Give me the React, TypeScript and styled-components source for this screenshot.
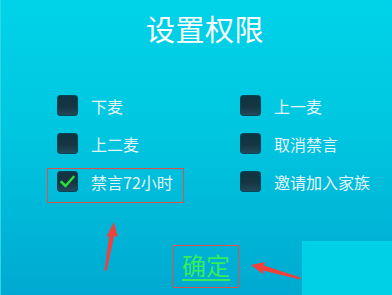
import React from "react";
import styled, { createGlobalStyle, css } from "styled-components";

const Global = createGlobalStyle`
  html, body { margin: 0; padding: 0; }
  body { width: 392px; height: 295px; overflow: hidden; }
  #root { width: 392px; height: 295px; }
`;

const Page = styled.div`
  position: relative;
  width: 392px;
  height: 295px;
  box-sizing: border-box;
  overflow: hidden;
  background: linear-gradient(180deg, #00d3e9 0%, #00c6e0 45%, #00a9d1 100%);
  border-left: 1px solid #2fd6ea;
  font-family: "Noto Sans CJK SC", "Noto Sans", sans-serif;
  display: flex;
  flex-direction: column;
  padding-left: 56px;
`;

const Title = styled.h1`
  margin: 12px 0 0;
  padding-left: 89px;
  font-size: 29px;
  line-height: 32px;
  font-weight: 400;
  color: #ffffff;
  letter-spacing: 0.5px;
`;

const Grid = styled.div`
  margin-top: 51px;
  display: grid;
  grid-template-columns: 183px auto;
  row-gap: 17px;
`;

const Cell = styled.label<{ $marked?: boolean }>`
  position: relative;
  display: flex;
  align-items: center;
  gap: 13px;
  height: 21px;
  ${(p) =>
    p.$marked &&
    css`
      &::after {
        content: "";
        position: absolute;
        left: -10px;
        top: -3px;
        width: 137px;
        height: 35px;
        border: 1px solid #d9534a;
        box-sizing: border-box;
        pointer-events: none;
      }
    `}
`;

const Box = styled.span`
  width: 21px;
  height: 21px;
  box-sizing: border-box;
  border-radius: 3px;
  background: linear-gradient(180deg, #0f3442 0%, #163542 55%, #22495a 100%);
  border: 1px solid #0b4656;
  display: flex;
  align-items: center;
  justify-content: center;
`;

const Label = styled.span`
  font-size: 16px;
  line-height: 20px;
  color: #e3f4f8;
`;

const Footer = styled.div`
  margin-top: 53px;
  padding-left: 116px;
  display: flex;
`;

const Confirm = styled.div`
  padding: 6px 8px 9px 8px;
  border: 1px solid #d9534a;
  font-size: 24px;
  line-height: 26px;
  color: #34ec5c;
  text-decoration: underline;
  text-decoration-thickness: 2px;
  text-underline-offset: 4px;
`;

const Panel = styled.div`
  position: absolute;
  left: 301px;
  top: 241px;
  width: 91px;
  height: 54px;
  background: #00d0e6;
`;

const Arrows = styled.svg`
  position: absolute;
  left: 0;
  top: 0;
  pointer-events: none;
`;

const Check = () => (
  <svg width="15" height="13" viewBox="0 0 15 13">
    <path d="M1.5 7 L5.5 11 L13.5 2" fill="none" stroke="#2add3a" strokeWidth="2.6" strokeLinecap="round" strokeLinejoin="round" />
  </svg>
);

const items = [
  { t: "下麦" },
  { t: "上一麦" },
  { t: "上二麦" },
  { t: "取消禁言" },
  { t: "禁言72小时", checked: true },
  { t: "邀请加入家族" },
];

export default function App() {
  return (
    <>
      <Global />
      <Page>
        <Title>设置权限</Title>
        <Grid>
          {items.map((it) => (
            <Cell key={it.t} $marked={it.checked}>
              <Box>{it.checked && <Check />}</Box>
              <Label>{it.t}</Label>
            </Cell>
          ))}
        </Grid>
        <Footer>
          <Confirm>确定</Confirm>
        </Footer>
        <Panel />
        <Arrows width="392" height="295" viewBox="0 0 392 295">
          <path d="M112.7 222 L117 237.5 L113.3 235.5 L105.5 271 L103.5 270.5 L108.3 235.5 L105.2 237.5 Z" fill="#f2403a" />
          <path d="M250 265 L264 262 L263 265.5 L299.5 277.5 L299 279.5 L262 270.5 L262.5 274.5 Z" fill="#f2403a" />
        </Arrows>
      </Page>
    </>
  );
}
